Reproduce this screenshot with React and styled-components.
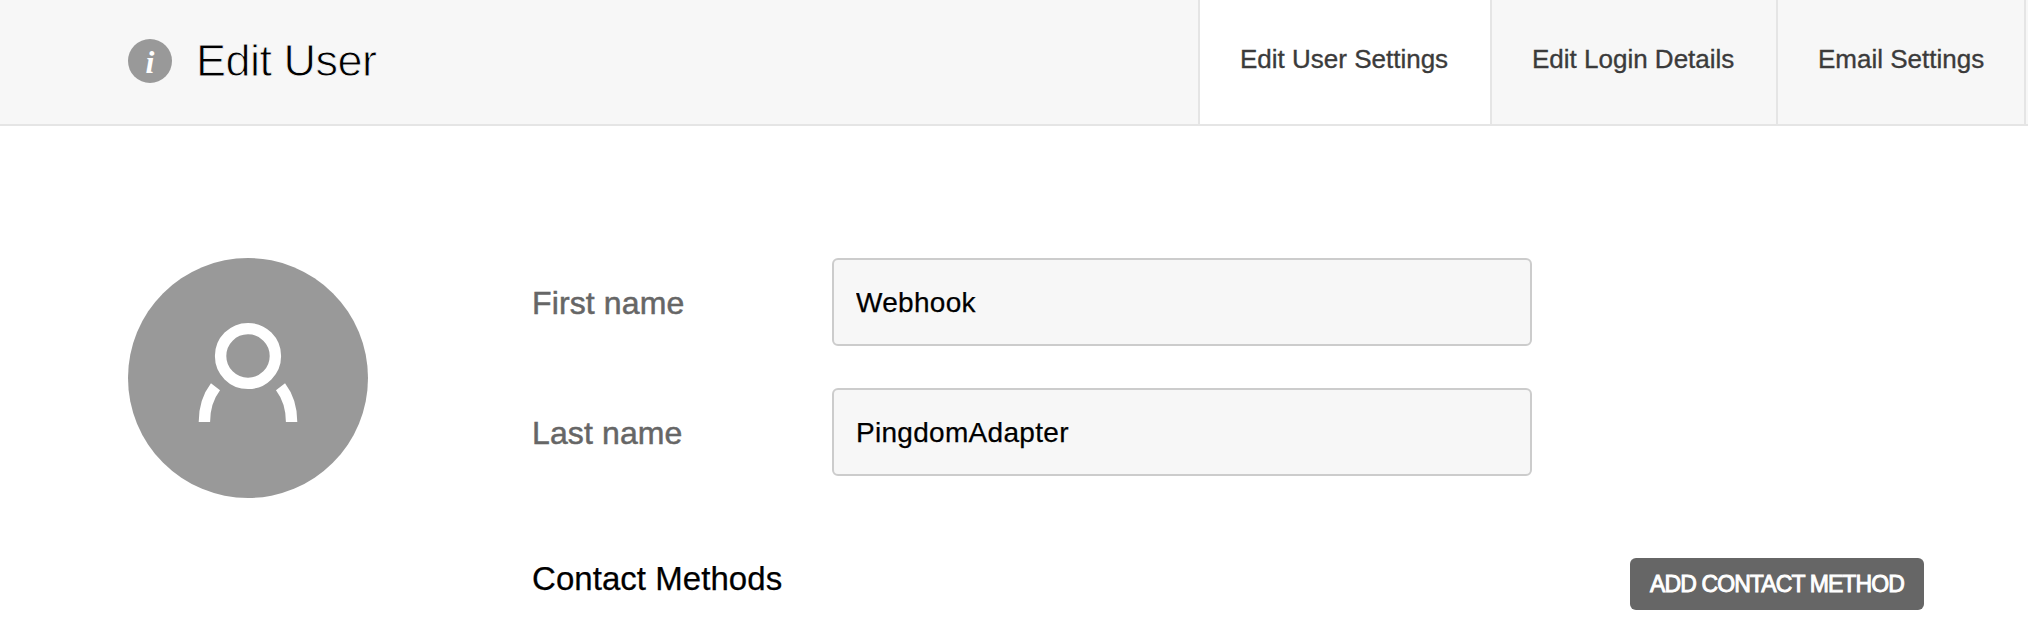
import React from "react";
import styled, { createGlobalStyle } from "styled-components";

const GlobalStyle = createGlobalStyle`
  *, *::before, *::after { box-sizing: border-box; }
  body {
    margin: 0;
    background: #fff;
    color: #000;
    font-family: "Liberation Sans", Arial, sans-serif;
  }
`;

const Page = styled.div`
  min-height: 622px;
  overflow: hidden;
`;

const Header = styled.header`
  display: flex;
  justify-content: space-between;
  height: 126px;
  padding: 0 2px 0 128px;
  background: #f7f7f7;
  border-bottom: 2px solid #e5e5e5;
`;

const Heading = styled.div`
  display: flex;
  align-items: center;
  gap: 24px;
  height: 122px;
`;

const InfoBadge = styled.span`
  width: 44px;
  height: 44px;
  border-radius: 50%;
  background: #999;
  color: #fff;
  font: italic bold 32px/46px "Liberation Serif", serif;
  text-align: center;
`;

const Title = styled.h1`
  margin: 0;
  font-size: 45px;
  line-height: 50px;
  font-weight: 400;
  letter-spacing: -0.5px;
  -webkit-text-stroke: 0.9px #f7f7f7;
`;

const Tabs = styled.nav`
  display: flex;
  border-right: 2px solid #e5e5e5;
`;

const Tab = styled.a`
  width: ${(p) => p.$width}px;
  padding-left: 40px;
  border-left: 2px solid #e5e5e5;
  background: ${(p) => (p.$active ? "#fff" : "transparent")};
  color: #3b3b3b;
  font-size: 26px;
  line-height: 118px;
  -webkit-text-stroke: 0.35px currentColor;
  white-space: nowrap;
`;

const Content = styled.main`
  display: grid;
  grid-template-columns: 240px 1392px;
  column-gap: 164px;
  padding: 132px 0 0 128px;
`;

const Avatar = styled.div`
  width: 240px;
  height: 240px;
  border-radius: 50%;
  background: #999;
`;

const Form = styled.div`
  display: flex;
  flex-direction: column;
  gap: 42px;
`;

const Field = styled.label`
  display: grid;
  grid-template-columns: 300px 700px;
  align-items: center;
`;

const FieldLabel = styled.span`
  padding-top: 1px;
  color: #666;
  font-size: 32px;
  line-height: 36px;
  letter-spacing: 0.12px;
  -webkit-text-stroke: 0.5px currentColor;
`;

const Input = styled.input`
  height: 88px;
  padding: 2px 22px 0;
  border: 2px solid #ccc;
  border-radius: 6px;
  background: #f7f7f7;
  color: #000;
  font: 28px "Liberation Sans", Arial, sans-serif;
  letter-spacing: 0.3px;
  -webkit-text-stroke: 0.25px currentColor;
  outline: none;
`;

const ContactBar = styled.section`
  display: flex;
  justify-content: space-between;
  margin-top: 40px;
`;

const SectionTitle = styled.h2`
  margin: 0;
  font-size: 33px;
  line-height: 42px;
  font-weight: 400;
  letter-spacing: 0.05px;
  -webkit-text-stroke: 0.25px currentColor;
`;

const AddButton = styled.button`
  width: 294px;
  height: 52px;
  padding: 0;
  border: 0;
  border-radius: 6px;
  background: #666;
  color: #fff;
  font: 23px "Liberation Sans", Arial, sans-serif;
  letter-spacing: -0.9px;
  -webkit-text-stroke: 0.9px #fff;
  white-space: nowrap;
`;

const tabs = [
  { label: "Edit User Settings", width: 292, active: true },
  { label: "Edit Login Details", width: 286 },
  { label: "Email Settings", width: 248 },
];

const fields = [
  { label: "First name", value: "Webhook" },
  { label: "Last name", value: "PingdomAdapter" },
];

function UserIcon() {
  return (
    <svg width="240" height="240" viewBox="0 0 240 240" fill="none" stroke="#fff" strokeWidth="11.4">
      <circle cx="120" cy="98" r="27.4" />
      <path d="M76.4 164C76.4 150 80 138.500 87.500 128.700" />
      <path d="M163.600 164C163.600 150 160 138.500 152.500 128.700" />
    </svg>
  );
}

export default function App() {
  return (
    <Page>
      <GlobalStyle />
      <Header>
        <Heading>
          <InfoBadge>i</InfoBadge>
          <Title>Edit User</Title>
        </Heading>
        <Tabs>
          {tabs.map((tab) => (
            <Tab key={tab.label} $width={tab.width} $active={tab.active}>
              {tab.label}
            </Tab>
          ))}
        </Tabs>
      </Header>
      <Content>
        <Avatar>
          <UserIcon />
        </Avatar>
        <Form>
          {fields.map((field) => (
            <Field key={field.label}>
              <FieldLabel>{field.label}</FieldLabel>
              <Input defaultValue={field.value} spellCheck={false} />
            </Field>
          ))}
          <ContactBar>
            <SectionTitle>Contact Methods</SectionTitle>
            <AddButton type="button">ADD CONTACT METHOD</AddButton>
          </ContactBar>
        </Form>
      </Content>
    </Page>
  );
}
